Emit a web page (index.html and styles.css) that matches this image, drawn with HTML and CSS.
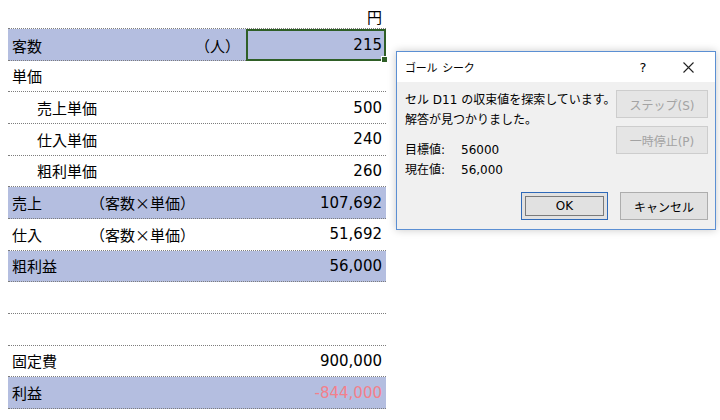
FILE: index.html
```html
<!DOCTYPE html>
<html lang="ja">
<head>
    <meta charset="UTF-8">
    <title>ゴール シーク</title>
    <link rel="stylesheet" href="styles.css">
</head>
<body>
<!-- シート部分 -->
<div class="sheet">
    <div class="row head"><span class="val unit">円</span></div>
    <div class="row blue">
        <span class="name">客数</span><span class="note right">（人）</span><span class="val selected">215</span>
    </div>
    <div class="row"><span class="name">単価</span></div>
    <div class="row"><span class="name indent">売上単価</span><span class="val">500</span></div>
    <div class="row"><span class="name indent">仕入単価</span><span class="val">240</span></div>
    <div class="row"><span class="name indent">粗利単価</span><span class="val">260</span></div>
    <div class="row blue">
        <span class="name">売上</span><span class="note">（客数×単価）</span><span class="val">107,692</span>
    </div>
    <div class="row">
        <span class="name">仕入</span><span class="note">（客数×単価）</span><span class="val">51,692</span>
    </div>
    <div class="row blue"><span class="name">粗利益</span><span class="val">56,000</span></div>
    <div class="row"></div>
    <div class="row"></div>
    <div class="row"><span class="name">固定費</span><span class="val">900,000</span></div>
    <div class="row blue"><span class="name">利益</span><span class="val neg">-844,000</span></div>
</div>

<!-- ゴールシークのダイアログ -->
<div class="dialog">
    <div class="dialog-title">
        <span class="title">ゴール シーク</span>
        <span class="help">?</span>
        <span class="close">
            <svg width="11" height="11" viewBox="0 0 11 11">
                <path d="M0.5 0.5 L10.5 10.5 M10.5 0.5 L0.5 10.5" stroke="#222" stroke-width="1.1" fill="none"/>
            </svg>
        </span>
    </div>
    <div class="dialog-body">
        <div class="message">
            <div class="line">セル D11 の収束値を探索しています。</div>
            <div class="line">解答が見つかりました。</div>
            <div class="line gap"><span class="key">目標値:</span>56000</div>
            <div class="line"><span class="key">現在値:</span>56,000</div>
        </div>
        <div class="side-buttons">
            <button class="btn" disabled>ステップ(S)</button>
            <button class="btn" disabled>一時停止(P)</button>
        </div>
    </div>
    <div class="dialog-footer">
        <button class="btn ok">OK</button>
        <button class="btn cancel">キャンセル</button>
    </div>
</div>
</body>
</html>
```

FILE: styles.css
```css
body {
    margin: 0;
    padding: 0 8px;
    background-color: #fff;
    color: #000;
    font-family: "Noto Sans CJK JP", "Liberation Sans", sans-serif;
}

/* シート */
.sheet {
    width: 378px;
    font-size: 15px;
}

.row {
    display: grid;
    grid-template-columns: 82px 156px 140px;
    height: 31.67px;
    align-items: center;
    border-bottom: 1px dotted #7d7d7d;
    box-sizing: border-box;
}

.row.head {
    height: 29px;
}

.row.blue {
    background-color: #b4bee0;
}

.name {
    grid-column: 1;
    padding-left: 4px;
    white-space: nowrap;
}

.name.indent {
    padding-left: 29px;
}

.note {
    grid-column: 2;
    white-space: nowrap;
}

.note.right {
    text-align: right;
    padding-right: 6px;
}

.val {
    grid-column: 3;
    text-align: right;
    padding-right: 4px;
    font-family: "DejaVu Sans", "Noto Sans CJK JP", sans-serif;
}

.val.unit {
    padding-top: 4px;
    font-family: "Noto Sans CJK JP", sans-serif;
}

.val.neg {
    color: #f3808b;
}

/* 選択中のセル */
.selected {
    position: relative;
    align-self: start;
    height: 32px;
    box-sizing: border-box;
    border: 2px solid #2f5f27;
    display: flex;
    align-items: center;
    justify-content: flex-end;
    padding-right: 2px;
}

.selected::after {
    content: "";
    position: absolute;
    right: -4px;
    bottom: -4px;
    width: 5px;
    height: 5px;
    background-color: #2f5f27;
    border: 1px solid #fff;
}

/* ダイアログ */
.dialog {
    position: absolute;
    left: 396px;
    top: 51px;
    width: 320px;
    height: 179px;
    box-sizing: border-box;
    border: 1px solid #5b8fd3;
    background-color: #f0f0f0;
    box-shadow: 0 0 8px rgba(0, 0, 0, 0.22);
    display: flex;
    flex-direction: column;
    font-family: "DejaVu Sans", "Noto Sans CJK JP", sans-serif;
    font-size: 12px;
}

.dialog-title {
    height: 30px;
    background-color: #fff;
    display: flex;
    align-items: center;
    padding-left: 8px;
    font-size: 11px;
}

.dialog-title .title {
    flex: 1;
    font-family: "Noto Sans CJK JP", sans-serif;
    letter-spacing: -0.3px;
    word-spacing: 3px;
}

.dialog-title .help {
    width: 20px;
    text-align: center;
    font-size: 13px;
    margin-right: 30px;
}

.dialog-title .close {
    display: flex;
    margin-right: 21px;
}

.dialog-body {
    display: flex;
    padding: 8px 7px 0 8px;
}

.message {
    flex: 1;
}

.message .line {
    line-height: 20px;
}

.message .gap {
    margin-top: 10px;
}

.message .key {
    display: inline-block;
    width: 56px;
}

.side-buttons {
    display: flex;
    flex-direction: column;
    gap: 8px;
    width: 92px;
}

.btn {
    height: 28px;
    border: 1px solid #adadad;
    background-color: #e1e1e1;
    font-family: "DejaVu Sans", "Noto Sans CJK JP", sans-serif;
    font-size: 12px;
    color: #000;
    padding: 0;
}

.btn:disabled {
    color: #a3a3a3;
    background-color: #e5e5e5;
    border-color: #cdcdcd;
}

.dialog-footer {
    margin-top: auto;
    display: flex;
    justify-content: flex-end;
    gap: 12px;
    padding: 0 7px 9px 0;
}

.btn.ok {
    width: 87px;
    border-color: #2e69b8;
    box-shadow: inset 0 0 0 3px #e1e1e1, inset 0 0 0 4px #7a7a7a;
}

.btn.cancel {
    width: 88px;
}
```
